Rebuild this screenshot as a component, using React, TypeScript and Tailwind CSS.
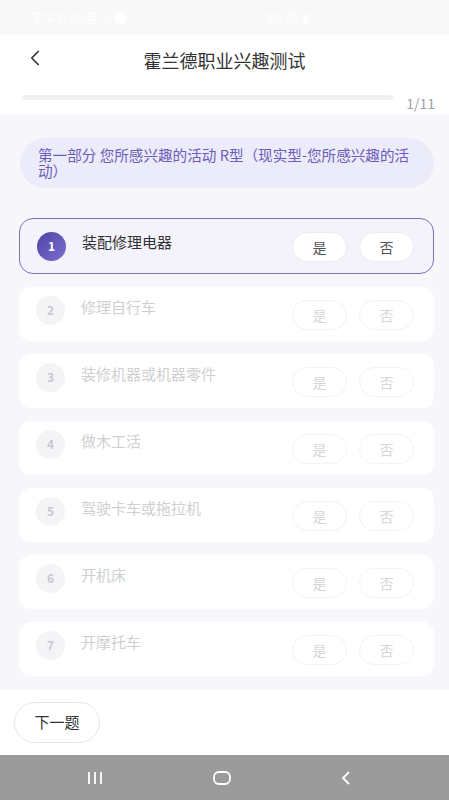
import { ChevronLeft } from 'lucide-react';

const questions = [
  '装配修理电器',
  '修理自行车',
  '装修机器或机器零件',
  '做木工活',
  '驾驶卡车或拖拉机',
  '开机床',
  '开摩托车',
];

function QuestionCard({ index, text, active }: { index: number; text: string; active: boolean }) {
  if (active) {
    return (
      <div className="flex items-center h-[56px] rounded-[14px] border-[1.5px] border-[#7b72bc] bg-[#f4f3fc] pl-[17px] pr-[19px]">
        <span className="flex items-center justify-center w-[29px] h-[29px] rounded-full bg-gradient-to-br from-[#4f43a3] to-[#7d6fd0] text-white text-[12px] font-bold">
          {index}
        </span>
        <span className="ml-[16px] mb-[7px] text-[15px] text-[#333]">{text}</span>
        <div className="ml-auto mt-[2px] flex gap-[12px]">
          <button className="w-[55px] h-[30px] rounded-full bg-white border border-[#ececf0] text-[14px] text-[#555]">是</button>
          <button className="w-[55px] h-[30px] rounded-full bg-white border border-[#ececf0] text-[14px] text-[#555]">否</button>
        </div>
      </div>
    );
  }
  return (
    <div className="flex items-center h-[54px] rounded-[12px] bg-white pl-[17px] pr-[20px]">
      <span className="-mt-[8px] flex items-center justify-center w-[29px] h-[29px] rounded-full bg-[#f4f4f6] text-[#c9c9cc] text-[12px] font-semibold">
        {index}
      </span>
      <span className="ml-[16px] mb-[14px] text-[15px] text-[#cfcfd2]">{text}</span>
      <div className="ml-auto mt-[2px] flex gap-[12px]">
        <button className="w-[55px] h-[30px] rounded-full bg-white border border-[#f3f3f5] text-[14px] text-[#d6d6d8]">是</button>
        <button className="w-[55px] h-[30px] rounded-full bg-white border border-[#f3f3f5] text-[14px] text-[#d6d6d8]">否</button>
      </div>
    </div>
  );
}

export default function App() {
  return (
    <div
      className="w-[449px] h-[800px] flex flex-col bg-white overflow-hidden"
      style={{ fontFamily: '"Noto Sans CJK SC", "Noto Sans", sans-serif' }}
    >
      {/* status bar, washed out */}
      <div className="h-[35px] bg-[#f8f8f8] flex items-center justify-between px-[30px] text-[13px] text-white">
        <span>下午3:20 ⊠ ◷ ●</span>
        <span className="mr-[110px]">5G 46 ▮</span>
      </div>

      {/* header */}
      <div className="relative h-[52px] flex items-center justify-center">
        <ChevronLeft className="absolute left-[22px] top-[10px] w-[26px] h-[26px] text-[#333]" strokeWidth={1.6} />
        <h1 className="text-[18px] text-[#333] -mt-[2px]">霍兰德职业兴趣测试</h1>
      </div>

      {/* progress */}
      <div className="h-[28px] flex items-center pl-[22px] pr-[14px]">
        <div className="flex-1 h-[5px] rounded-full bg-[#f0f0f2] -mt-[8px]" />
        <span className="ml-[13px] mt-[4px] text-[14px] text-[#a0a0a4]">1/11</span>
      </div>

      {/* content */}
      <div className="flex-1 bg-[#f7f7fb] pt-[23px] pl-[19px] pr-[15px] flex flex-col">
        <div className="ml-[1px] rounded-[26px] bg-[#ecebf9] pl-[18px] pr-[12px] py-[9px] text-[14.6px] leading-[16px] text-[#6b5cb9]">
          第一部分 您所感兴趣的活动 R型（现实型-您所感兴趣的活动）
        </div>

        <div className="mt-[30px] flex flex-col gap-[13px]">
          {questions.map((q, i) => (
            <QuestionCard key={q} index={i + 1} text={q} active={i === 0} />
          ))}
        </div>
      </div>

      {/* footer */}
      <div className="h-[65px] flex items-center px-[14px] bg-white">
        <button className="w-[86px] h-[41px] rounded-full border border-[#e6e6e8] text-[15px] text-[#333]">下一题</button>
      </div>

      {/* system nav */}
      <div className="h-[45px] bg-[#9b9b9b] flex items-center gap-[107px] pl-[85px]">
        <svg width="20" height="16" viewBox="0 0 20 16">
          <path d="M4 2v12M10 2v12M16 2v12" stroke="white" strokeWidth="1.8" />
        </svg>
        <svg width="20" height="16" viewBox="0 0 20 16">
          <rect x="2" y="2" width="16" height="12" rx="5" fill="none" stroke="white" strokeWidth="1.8" />
        </svg>
        <svg width="14" height="18" viewBox="0 0 14 18">
          <path d="M10 3L4 9l6 6" fill="none" stroke="white" strokeWidth="1.8" />
        </svg>
      </div>
    </div>
  );
}
